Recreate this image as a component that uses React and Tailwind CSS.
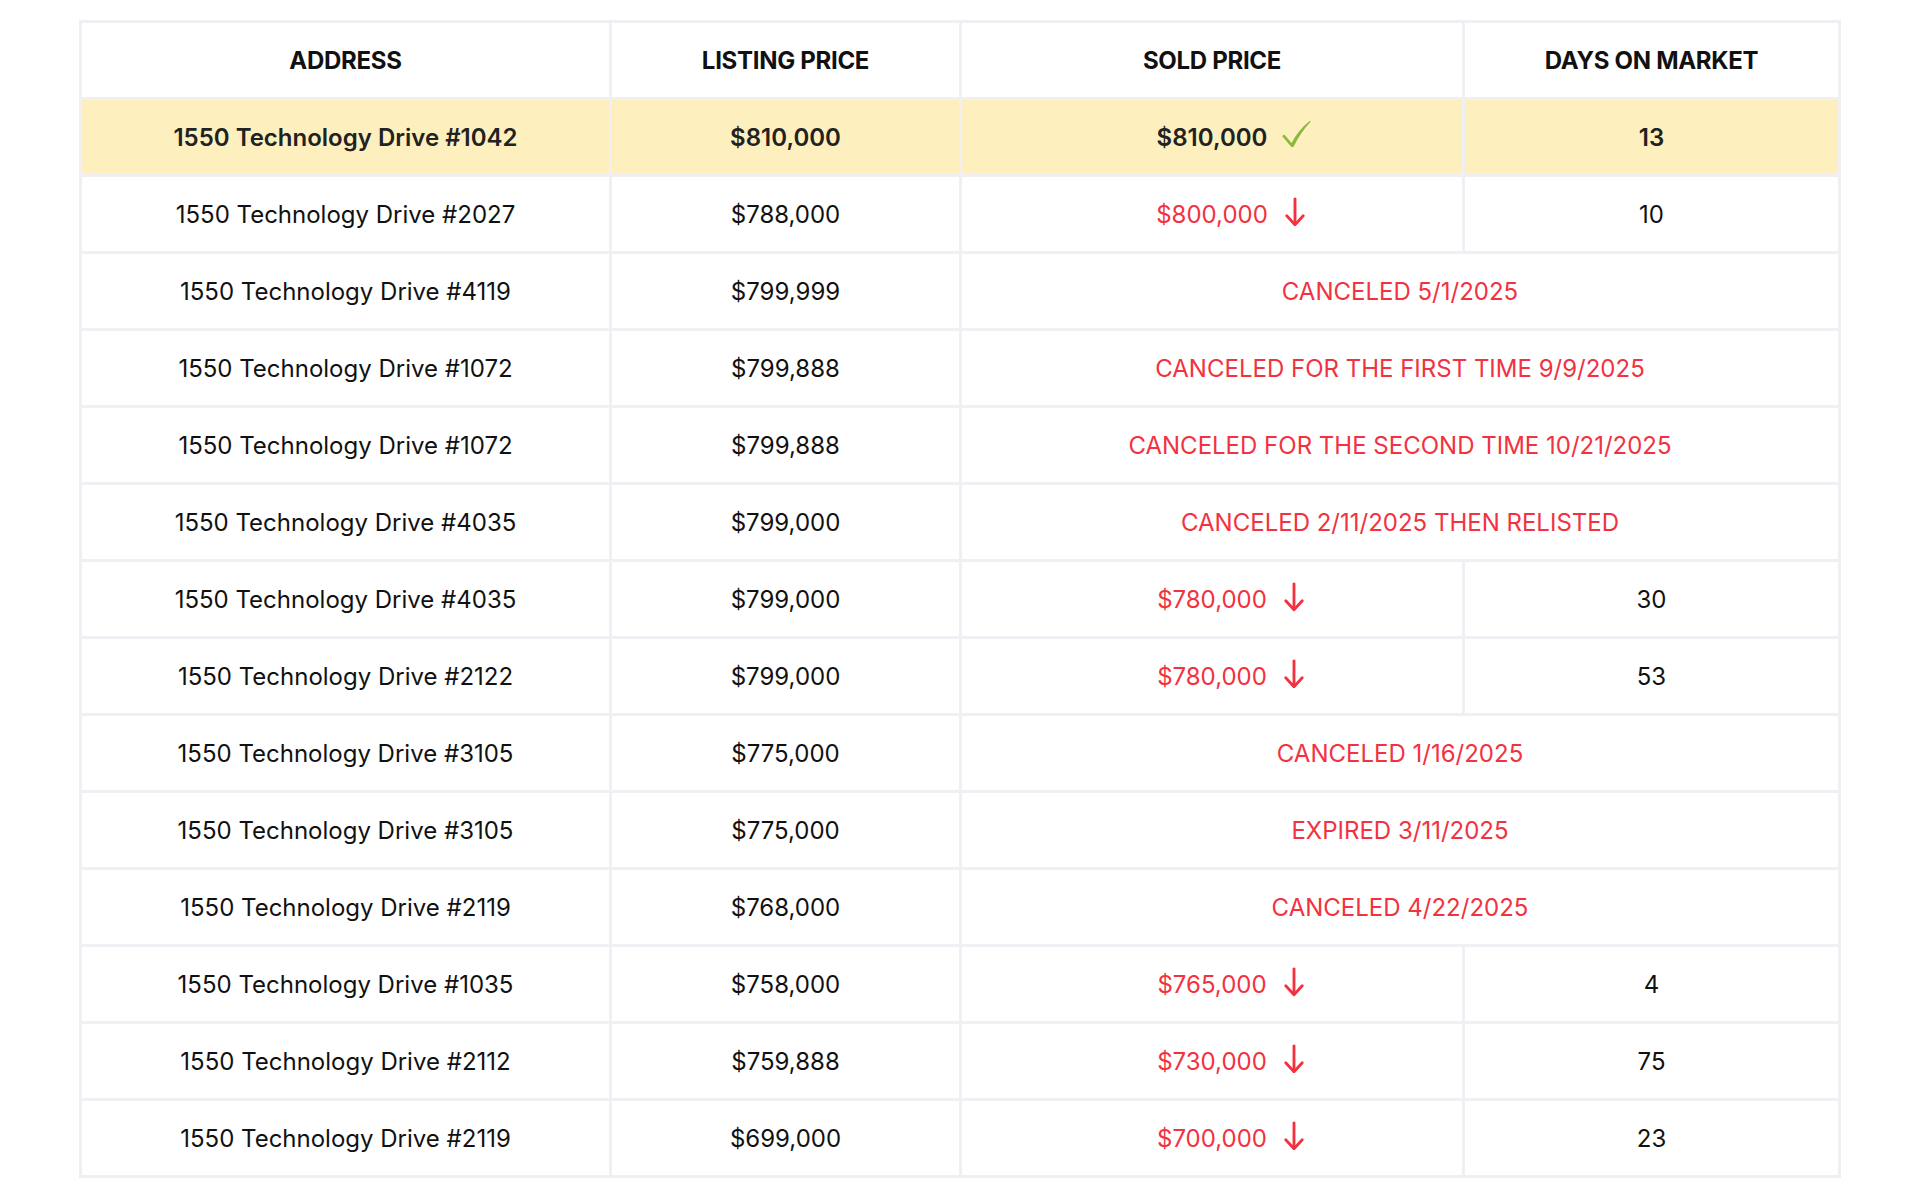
import React from "react";

const rows = [
  { address: "1550 Technology Drive #1042", list: "$810,000", sold: "$810,000", days: "13", sold_ok: true },
  { address: "1550 Technology Drive #2027", list: "$788,000", sold: "$800,000", days: "10" },
  { address: "1550 Technology Drive #4119", list: "$799,999", note: "CANCELED 5/1/2025" },
  { address: "1550 Technology Drive #1072", list: "$799,888", note: "CANCELED FOR THE FIRST TIME 9/9/2025" },
  { address: "1550 Technology Drive #1072", list: "$799,888", note: "CANCELED FOR THE SECOND TIME 10/21/2025" },
  { address: "1550 Technology Drive #4035", list: "$799,000", note: "CANCELED 2/11/2025 THEN RELISTED" },
  { address: "1550 Technology Drive #4035", list: "$799,000", sold: "$780,000", days: "30" },
  { address: "1550 Technology Drive #2122", list: "$799,000", sold: "$780,000", days: "53" },
  { address: "1550 Technology Drive #3105", list: "$775,000", note: "CANCELED 1/16/2025" },
  { address: "1550 Technology Drive #3105", list: "$775,000", note: "EXPIRED 3/11/2025" },
  { address: "1550 Technology Drive #2119", list: "$768,000", note: "CANCELED 4/22/2025" },
  { address: "1550 Technology Drive #1035", list: "$758,000", sold: "$765,000", days: "4" },
  { address: "1550 Technology Drive #2112", list: "$759,888", sold: "$730,000", days: "75" },
  { address: "1550 Technology Drive #2119", list: "$699,000", sold: "$700,000", days: "23" },
];

function CheckMark() {
  return (
    <svg width="30" height="28" viewBox="0 0 29 27" className="text-[#8cb83e]">
      <path
        d="M1 15.5 L3.2 14 L10.2 22.2 Q17 9.5 28 0.8 L28.6 1.6 Q19.5 11 12 26 L10 26 Z"
        fill="currentColor"
      />
    </svg>
  );
}

function DownArrow() {
  return (
    <svg width="22" height="29" viewBox="0 0 20 26" className="text-[#f2323f]" fill="none">
      <path d="M10 1 V24" stroke="currentColor" strokeWidth="2.6" strokeLinecap="round" />
      <path d="M2.5 16.5 L10 24.5 L17.5 16.5" stroke="currentColor" strokeWidth="2.6" strokeLinecap="round" strokeLinejoin="round" />
    </svg>
  );
}

function Sold({ value, ok }) {
  return (
    <span className={"relative inline-block " + (ok ? "text-[#222]" : "text-[#f2323f]")}>
      {value}
      <span className={"absolute left-full top-1/2 -translate-y-1/2 " + (ok ? "ml-[14px] -mt-[4px]" : "ml-[16px] -mt-[3px]")}>
        {ok ? <CheckMark /> : <DownArrow />}
      </span>
    </span>
  );
}

export default function App() {
  return (
    <div className="min-h-screen bg-white px-[79px] pt-[20px] font-['Inter','Liberation_Sans',sans-serif]">
      <table className="w-[1762px] table-fixed border-separate border-spacing-[3px] bg-[#eef0f3] text-[24px] text-[#111]">
        <thead>
          <tr className="h-[74px] text-[24px] font-semibold tracking-[-0.3px]">
            <th className="w-[527px] bg-white pt-[2px]">ADDRESS</th>
            <th className="w-[347px] bg-white pt-[2px]">LISTING PRICE</th>
            <th className="w-[500px] bg-white pt-[2px]">SOLD PRICE</th>
            <th className="w-[373px] bg-white pt-[2px]">DAYS ON MARKET</th>
          </tr>
        </thead>
        <tbody>
          {rows.map((r, i) => {
            const hi = !!r.sold_ok;
            const cell = hi
              ? "bg-[#fef0be] pt-[2px] text-center font-semibold text-[#222]"
              : "bg-white pt-[2px] text-center";
            return (
              <tr key={i} className="h-[74px]">
                <td className={cell}>{r.address}</td>
                <td className={cell}>{r.list}</td>
                {r.note ? (
                  <td colSpan={2} className="bg-white pt-[2px] text-center text-[#f2323f]">
                    {r.note}
                  </td>
                ) : (
                  <>
                    <td className={cell}>
                      <Sold value={r.sold} ok={r.sold_ok} />
                    </td>
                    <td className={cell}>{r.days}</td>
                  </>
                )}
              </tr>
            );
          })}
        </tbody>
      </table>
    </div>
  );
}
